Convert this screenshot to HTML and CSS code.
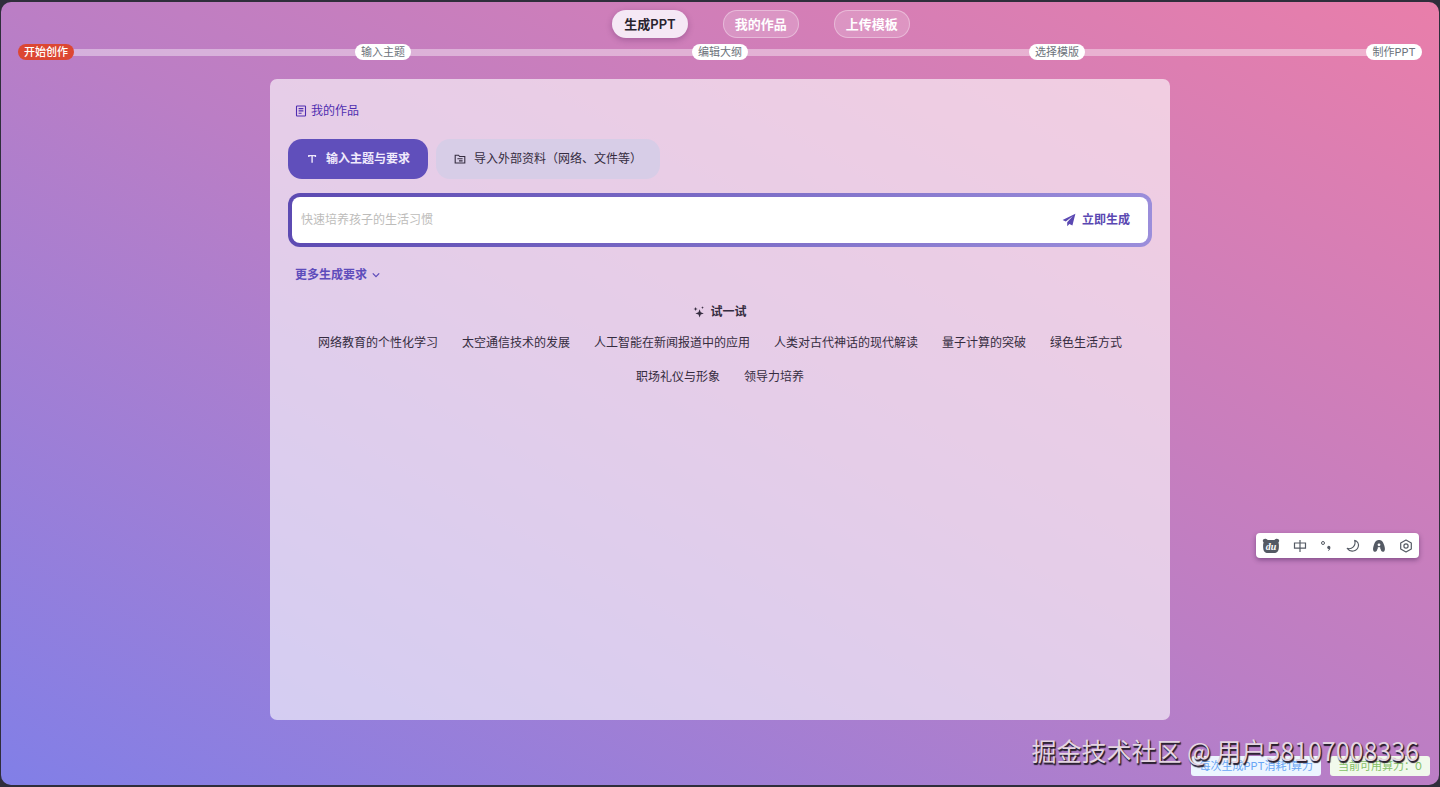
FILE: index.html
```html
<!DOCTYPE html>
<html lang="zh-CN">
<head>
<meta charset="utf-8">
<meta name="viewport" content="width=device-width, initial-scale=1">
<title>生成PPT</title>
<link rel="stylesheet" href="styles.css">
</head>
<body>
<div class="app">
  <nav class="nav">
    <button type="button" class="nav-btn nav-btn-active">生成PPT</button>
    <button type="button" class="nav-btn">我的作品</button>
    <button type="button" class="nav-btn">上传模板</button>
  </nav>

  <ol class="steps">
    <li class="step"><span class="pill pill-active">开始创作</span></li>
    <li class="step"><span class="pill">输入主题</span></li>
    <li class="step"><span class="pill">编辑大纲</span></li>
    <li class="step"><span class="pill">选择模版</span></li>
    <li class="step"><span class="pill">制作PPT</span></li>
  </ol>

  <main class="panel">
    <a href="#" class="works">
      <svg width="12" height="12" viewBox="0 0 12 12" fill="none" stroke="currentColor" stroke-width="1.1" aria-hidden="true"><rect x="1.5" y="1" width="9" height="10" rx=".6"/><path d="M3.6 3.6h4.8M3.6 5.9h4.8M3.6 8.2h3"/></svg>
      我的作品
    </a>

    <div class="tabs">
      <button type="button" class="tab tab-active">
        <svg width="12" height="12" viewBox="0 0 12 12" fill="none" stroke="currentColor" stroke-width="1.4" aria-hidden="true"><path d="M2.8 4V2.6h6.6V4M6.1 2.6v7.2"/></svg>
        输入主题与要求
      </button>
      <button type="button" class="tab">
        <svg width="12" height="12" viewBox="0 0 12 12" fill="none" stroke="currentColor" stroke-width="1.1" aria-hidden="true"><path d="M1.2 10V2.2h3.3l1.2 1.3h5.1V10zM3.4 5.8h5.2M5 7.9h3.6"/></svg>
        导入外部资料（网络、文件等）
      </button>
    </div>

    <form class="prompt">
      <input class="prompt-input" type="text" aria-label="主题" placeholder="快速培养孩子的生活习惯">
      <button type="button" class="generate">
        <svg width="14" height="14" viewBox="0 0 14 14" fill="currentColor" aria-hidden="true"><path d="M13.4.8.6 6.9l3.2 1.6L10.9 3 5.2 9.2v4l2.2-2.3 3 1.5z"/></svg>
        立即生成
      </button>
    </form>

    <button type="button" class="more">
      更多生成要求
      <svg width="8" height="8" viewBox="0 0 8 8" fill="none" stroke="currentColor" stroke-width="1.3" aria-hidden="true"><path d="M.8 2.4 4 5.6l3.2-3.2"/></svg>
    </button>

    <h2 class="try-title">
      <svg width="12" height="12" viewBox="0 0 12 12" fill="currentColor" aria-hidden="true"><path d="M6.6 3.2 7.7 6.3l3.1 1.1-3.1 1.1-1.1 3.1-1.1-3.1-3.1-1.1 3.1-1.1zM2.6.9l.6 1.5 1.5.6-1.5.6-.6 1.5L2 3.6.5 3 2 2.4zM9.5.3l.4 1 1 .4-1 .4-.4 1-.4-1-1-.4 1-.4z"/></svg>
      试一试
    </h2>
    <div class="ideas">
      <button type="button" class="idea">网络教育的个性化学习</button>
      <button type="button" class="idea">太空通信技术的发展</button>
      <button type="button" class="idea">人工智能在新闻报道中的应用</button>
      <button type="button" class="idea">人类对古代神话的现代解读</button>
      <button type="button" class="idea">量子计算的突破</button>
      <button type="button" class="idea">绿色生活方式</button>
      <button type="button" class="idea">职场礼仪与形象</button>
      <button type="button" class="idea">领导力培养</button>
    </div>
  </main>

  <footer class="footer">
    <span class="tag tag-blue">每次生成PPT消耗1算力</span>
    <span class="tag tag-green">当前可用算力：0</span>
  </footer>

  <div class="watermark">掘金技术社区 @ 用户58107008336</div>

  <div class="ime">
    <svg width="18" height="16" viewBox="0 0 18 16" aria-hidden="true"><path fill="#545a64" d="M1 3.6C.2 1.6 2 .4 3.6.7c1 .1 1.6.6 2 1.2h6.8c.4-.6 1-1.100 2-1.200 1.600-.3 3.400.9 2.600 2.900-.1.500-.4.800-.6 1 .6 1.300.6 3.300.4 5.400-.3 3.500-1.600 5-4.800 5H6c-3.200 0-4.500-1.500-4.800-5C1 7.900 1 5.900 1.600 4.600 1.400 4.400 1.100 4.100 1 3.600z"/><text class="ime-logo" x="9" y="12" text-anchor="middle">du</text></svg>
    <svg width="14" height="14" viewBox="0 0 14 14" fill="none" stroke="#545a64" stroke-width="1.200" aria-hidden="true"><path d="M1.500 4h11v5.200h-11zM7 1v12"/></svg>
    <svg width="14" height="14" viewBox="0 0 14 14" aria-hidden="true"><circle cx="4" cy="4" r="1.500" fill="none" stroke="#545a64"/><path fill="#545a64" d="M9.300 6.900c1.300-.2 2.200.6 2.100 1.900-.1 1.500-.8 2.600-2.200 3.100l-.3-.5c.7-.4 1-.8 1.100-1.300-1 .1-1.800-.5-1.800-1.500 0-.9.500-1.600 1.100-1.700z"/></svg>
    <svg width="14" height="14" viewBox="0 0 14 14" fill="none" stroke="#545a64" stroke-width="1.100" stroke-linejoin="round" aria-hidden="true"><path d="M8.600 1.400c3 .7 4.600 3.600 3.600 6.500-1.400 4.500-7.800 6-11 1.500 4.700 1.300 9.200-2.800 7.400-8z"/></svg>
    <svg width="14" height="14" viewBox="0 0 14 14" aria-hidden="true"><path fill="#545a64" d="M7 1c3 0 4.300 2.200 5.200 5.300.8 2.600 1.400 5.900-.8 6.500-1.800.4-2.700-1.300-2.900-3H5.500c-.2 1.700-1.100 3.400-2.900 3C.4 12.200 1 8.900 1.800 6.300 2.700 3.200 4 1 7 1z"/><circle cx="7" cy="5.800" r="1.400" fill="#fff"/><path d="M7 8.200v5" stroke="#fff" stroke-width="2.400"/></svg>
    <svg width="14" height="14" viewBox="0 0 14 14" fill="none" stroke="#545a64" stroke-width="1.200" stroke-linejoin="round" aria-hidden="true"><path d="M7 1l5.300 3v6L7 13l-5.300-3V4z"/><circle cx="7" cy="7" r="2.100"/></svg>
  </div>
</div>
</body>
</html>
```
FILE: styles.css
```css
* {
  box-sizing: border-box;
}

body {
  margin: 0;
  min-height: 100vh;
  display: flex;
  padding: 2px 1px;
  background: #2f2e3b;
  font-family: Inter, "Noto Sans CJK SC", sans-serif;
  font-size: 12px;
  line-height: 20px;
  color: #352c40;
}

button,
input {
  font: inherit;
  color: inherit;
  border: 0;
  padding: 0;
  background: none;
}

button {
  cursor: pointer;
}

svg {
  flex: none;
}

.app {
  position: relative;
  flex: 1;
  display: flex;
  flex-direction: column;
  border-radius: 10px;
  background: linear-gradient(to top right, #817fe7, #bb7ec5 50%, #e97eaa);
}

.nav {
  display: flex;
  justify-content: center;
  gap: 35px;
  padding: 8px 0 6px 82px;
}

.nav-btn {
  height: 28px;
  padding: 0 11px;
  border: 1px solid rgba(255, 255, 255, 0.35);
  border-radius: 14px;
  background: rgba(255, 255, 255, 0.18);
  font-size: 13px;
  font-weight: 600;
  color: #fff;
}

.nav-btn-active {
  border-color: transparent;
  background: #f5e8f5;
  background-clip: border-box;
  color: #29232d;
  box-shadow: 0 2px 6px rgba(70, 20, 80, 0.3);
}

.steps {
  display: flex;
  margin: 0;
  padding: 0 17px;
  list-style: none;
}

.step {
  display: flex;
  align-items: center;
}

.step + .step {
  flex: 1;
}

.step + .step::before {
  content: "";
  flex: 1;
  height: 7px;
  margin: 0 -4px;
  background: rgba(255, 255, 255, 0.4);
}

.pill {
  position: relative;
  width: 56px;
  border-radius: 8px;
  background: #fff;
  font-size: 11px;
  line-height: 16px;
  text-align: center;
  white-space: nowrap;
  color: #6d737b;
}

.pill-active {
  background: #dc4733;
  color: #fff;
  font-weight: 500;
}

.panel {
  flex: 1;
  width: 100%;
  max-width: 900px;
  margin: 19px auto 0;
  padding: 20px 18px;
  display: flex;
  flex-direction: column;
  border-radius: 7px;
  background: rgba(255, 255, 255, 0.61);
}

.works {
  display: flex;
  align-items: center;
  align-self: flex-start;
  gap: 4px;
  height: 24px;
  margin: 0 7px 16px;
  color: #4f2db0;
  text-decoration: none;
}

.tabs {
  display: flex;
  gap: 8px;
}

.tab {
  display: flex;
  align-items: center;
  justify-content: center;
  gap: 8px;
  height: 40px;
  padding: 0 18px;
  border-radius: 14px;
  background: #d7cde7;
}

.tab-active {
  background: #604fbb;
  color: #f0eafc;
  font-weight: 700;
}

.prompt {
  display: flex;
  height: 54px;
  margin: 14px 0 18px;
  border: 4px solid transparent;
  border-radius: 12px;
  background:
    linear-gradient(#fff, #fff) padding-box,
    linear-gradient(100deg, #5c4ab2, #9b8edb) border-box;
}

.prompt-input {
  flex: 1;
  min-width: 0;
  padding: 0 9px;
  outline: 0;
}

.prompt-input::placeholder {
  color: #bdbcba;
  opacity: 1;
}

.generate {
  display: flex;
  align-items: center;
  gap: 6px;
  padding: 0 18px;
  color: #5a48b2;
  font-weight: 700;
}

.more {
  display: flex;
  align-items: center;
  align-self: flex-start;
  gap: 5px;
  margin: 0 7px;
  color: #5e4cbb;
  font-weight: 700;
}

.try-title {
  display: flex;
  align-items: center;
  justify-content: center;
  gap: 5px;
  margin: 17px 0 11px;
  font-size: 12px;
  font-weight: 700;
}

.ideas {
  display: flex;
  flex-wrap: wrap;
  justify-content: center;
  gap: 14px 24px;
}

.footer {
  display: flex;
  justify-content: flex-end;
  gap: 9px;
  padding: 36px 9px 9px;
}

.tag {
  padding: 0 8px;
  border-radius: 3px;
  font-size: 11px;
}

.tag-blue {
  background: #ecf5ff;
  color: #69a6f5;
}

.tag-green {
  background: #f1f9ec;
  color: #85bf67;
}

.watermark {
  position: absolute;
  right: 20px;
  bottom: 17px;
  font-family: "Noto Sans CJK SC", sans-serif;
  font-size: 25px;
  line-height: 36px;
  color: #e5d5e2;
  text-shadow: 1px 1px 1px #29202f, 1px 2px 1px #29202f;
  white-space: nowrap;
  pointer-events: none;
}

.ime {
  position: absolute;
  right: 20px;
  top: 531px;
  display: flex;
  align-items: center;
  justify-content: space-between;
  width: 163px;
  height: 25px;
  padding: 0 6px;
  border-radius: 4px;
  background: #fff;
  box-shadow: 0 2px 5px rgba(50, 20, 70, 0.45);
}

.ime-logo {
  font: italic 700 10px "Liberation Serif", serif;
  fill: #fff;
}
```
